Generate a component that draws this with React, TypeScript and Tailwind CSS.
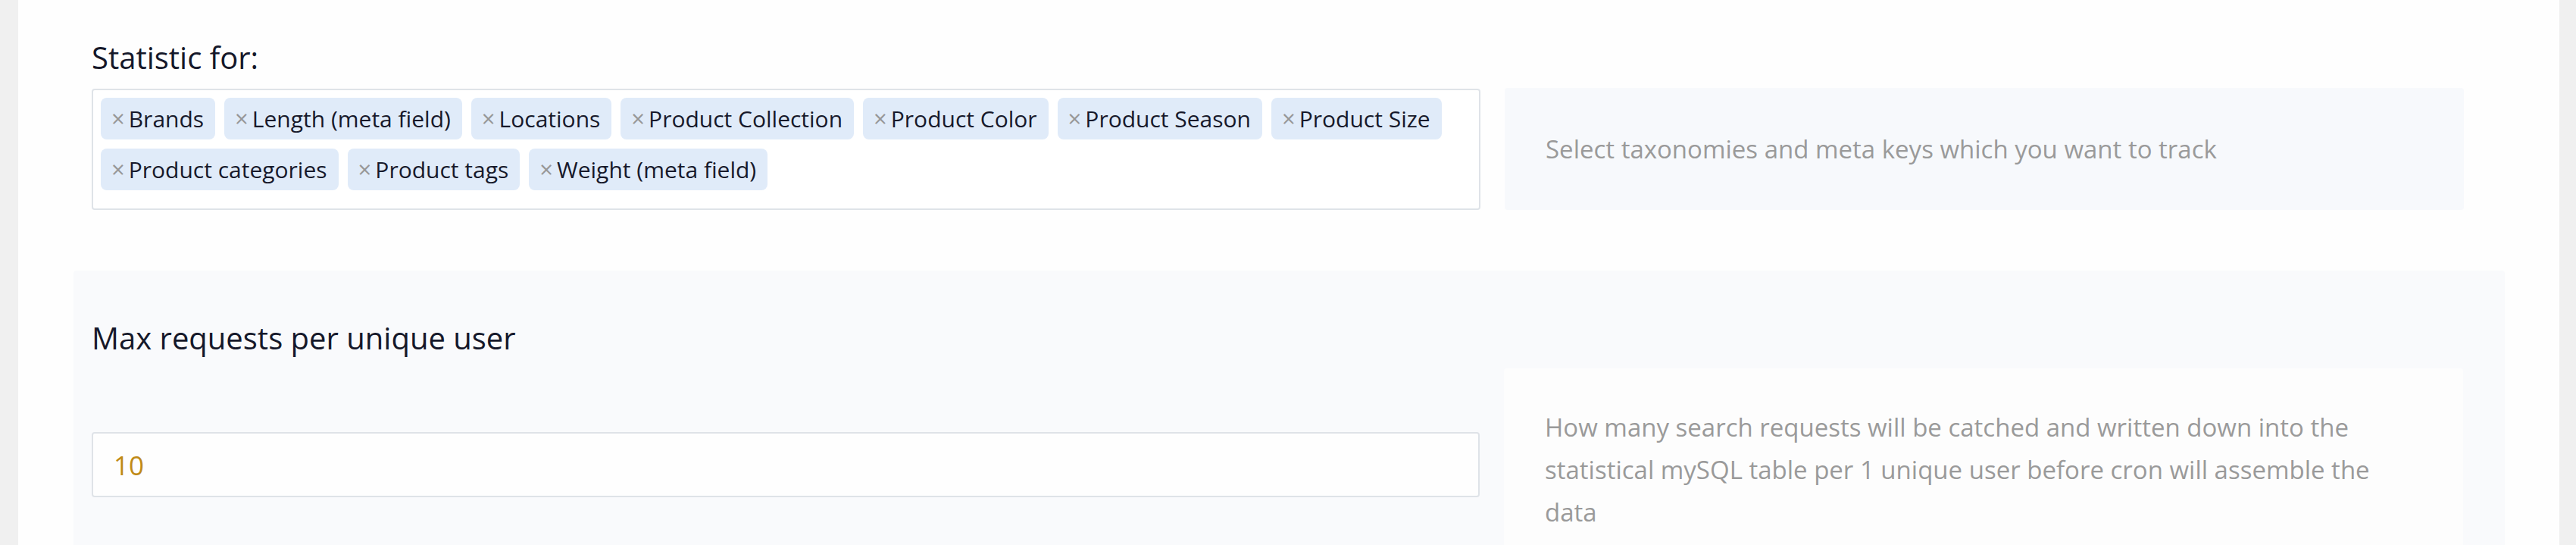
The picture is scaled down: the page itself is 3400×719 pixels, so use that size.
import React from "react";

const tagsRow = [
  "Brands",
  "Length (meta field)",
  "Locations",
  "Product Collection",
  "Product Color",
  "Product Season",
  "Product Size",
  "Product categories",
  "Product tags",
  "Weight (meta field)",
];

function Tag({ label }: { label: string }) {
  return (
    <div className="flex h-[55px] items-center rounded-[8px] bg-[#e0ebf9] pl-[14px] pr-[15px]">
      <span className="text-[31px] leading-none text-[#979797]">×</span>
      <span className="ml-[5px] text-[30px] leading-[41px] text-[#17192b]">{label}</span>
    </div>
  );
}

export default function App() {
  return (
    <div
      className="h-[719px] w-[3400px] overflow-hidden bg-[#f0f0f0]"
      style={{ fontFamily: '"Open Sans", "Noto Sans", sans-serif' }}
    >
      <div className="ml-[24px] h-[719px] w-[3354px] bg-[#fefefe] pt-[46px]">
        {/* Section 1 */}
        <div className="pl-[97px]">
          <div className="text-[40px] leading-[60px] text-[#15182a]">Statistic for:</div>
          <div className="mt-[11px] flex gap-[32px]">
            <div className="w-[1833px] rounded-[4px] border-2 border-[#dfe3e8] bg-white pb-[23px] pl-[10px] pr-[10px] pt-[10px]">
              <div className="flex flex-wrap gap-x-[12px] gap-y-[12px]">
                {tagsRow.map((t) => (
                  <Tag key={t} label={t} />
                ))}
              </div>
            </div>
            <div className="-mt-[1px] flex h-[161px] w-[1266px] items-center rounded-[4px] bg-[#f7f9fc] pl-[54px] pr-[54px]">
              <span className="text-[33px] leading-[56px] text-[#9a9a9a]">
                Select taxonomies and meta keys which you want to track
              </span>
            </div>
          </div>
        </div>

        {/* Section 2 */}
        <div className="ml-[73px] mt-[80px] h-[400px] w-[3209px] rounded-t-[4px] bg-[#f9fafc] pl-[24px] pt-[59px]">
          <div className="text-[40px] leading-[60px] text-[#15182a]">Max requests per unique user</div>
          <div className="mt-[10px] flex items-center gap-[32px]">
            <div className="flex h-[86px] w-[1832px] items-center rounded-[4px] border-2 border-[#dfe3e8] bg-[#fefefe] pl-[27px]">
              <span className="text-[35px] leading-none text-[#c08a17]">10</span>
            </div>
            <div className="w-[1266px] rounded-t-[4px] bg-[#fdfdfd] pb-[36px] pl-[54px] pr-[54px] pt-[50px] text-[33px] leading-[56px] text-[#9a9a9a]">
              <div className="whitespace-nowrap">How many search requests will be catched and written down into the</div>
              <div className="whitespace-nowrap">statistical mySQL table per 1 unique user before cron will assemble the</div>
              <div className="whitespace-nowrap">data</div>
            </div>
          </div>
        </div>
      </div>
    </div>
  );
}
